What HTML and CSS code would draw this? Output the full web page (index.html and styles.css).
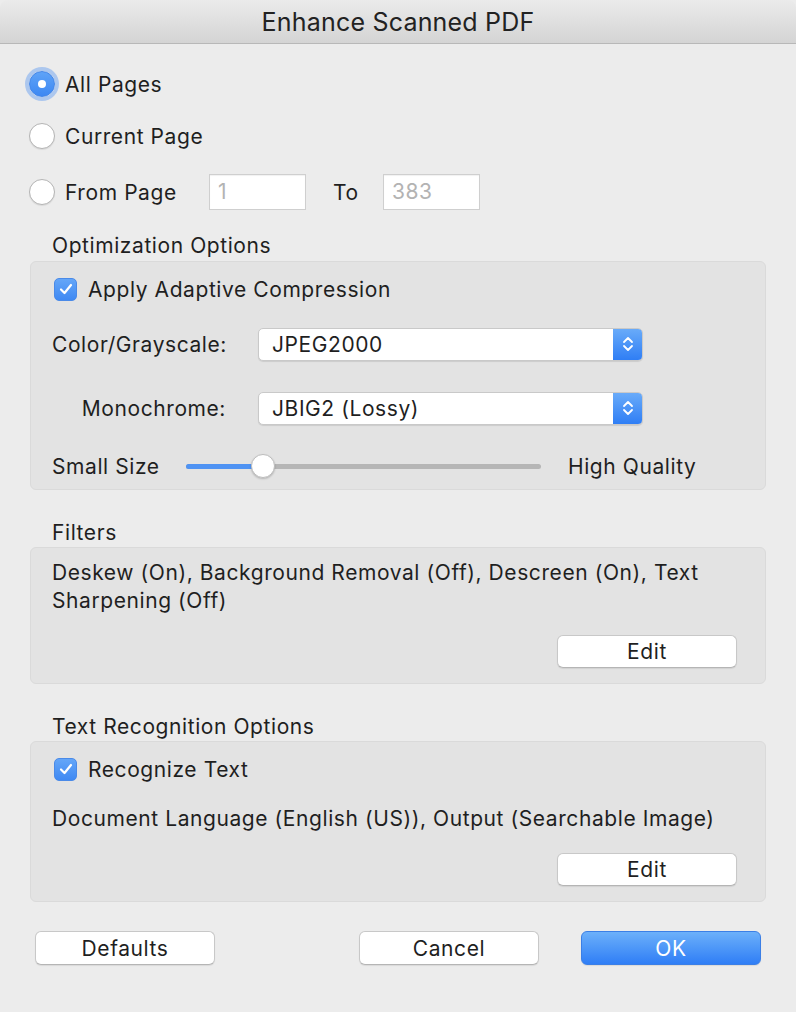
FILE: index.html
```html
<!DOCTYPE html>
<html>
<head>
<meta charset="utf-8">
<link rel="stylesheet" href="styles.css">
</head>
<body>
<div class="window">
  <div class="titlebar">Enhance Scanned PDF</div>
  <div class="content">
    <div class="pages">
      <div class="radio-row r1"><span class="radio on"><span class="dot"></span></span><span>All Pages</span></div>
      <div class="radio-row r2"><span class="radio"></span><span>Current Page</span></div>
      <div class="radio-row r3"><span class="radio"></span><span class="from">From Page</span><span class="field">1</span><span class="to">To</span><span class="field">383</span></div>
    </div>

    <div class="group-label first">Optimization Options</div>
    <div class="box opt">
      <div class="check-row">
        <span class="checkbox"><svg width="16" height="14" viewBox="0 0 16 14"><path d="M3 7.5 L6.5 11 L13 3" fill="none" stroke="#fff" stroke-width="2.2" stroke-linecap="round" stroke-linejoin="round"/></svg></span>
        <span>Apply Adaptive Compression</span>
      </div>
      <div class="popup-row p1">
        <span class="plabel">Color/Grayscale:</span>
        <div class="popup"><span class="pval">JPEG2000</span><span class="parrow"><svg width="12" height="20" viewBox="0 0 12 20"><path d="M2 8 L6 4 L10 8 M2 12 L6 16 L10 12" fill="none" stroke="#fff" stroke-width="1.8" stroke-linecap="round" stroke-linejoin="round"/></svg></span></div>
      </div>
      <div class="popup-row p2">
        <span class="plabel">Monochrome:</span>
        <div class="popup"><span class="pval">JBIG2 (Lossy)</span><span class="parrow"><svg width="12" height="20" viewBox="0 0 12 20"><path d="M2 8 L6 4 L10 8 M2 12 L6 16 L10 12" fill="none" stroke="#fff" stroke-width="1.8" stroke-linecap="round" stroke-linejoin="round"/></svg></span></div>
      </div>
      <div class="slider-row">
        <span class="slabel">Small Size</span>
        <div class="slider">
          <div class="track"><div class="fill" style="width:77px"></div></div>
          <span class="knob" style="left:65px"></span>
        </div>
        <span class="slabel right">High Quality</span>
      </div>
    </div>

    <div class="group-label">Filters</div>
    <div class="box filters">
      <p class="desc">Deskew (On), Background Removal (Off), Descreen (On), Text Sharpening (Off)</p>
      <div class="btn-row"><button class="btn">Edit</button></div>
    </div>

    <div class="group-label">Text Recognition Options</div>
    <div class="box ocr">
      <div class="check-row">
        <span class="checkbox"><svg width="16" height="14" viewBox="0 0 16 14"><path d="M3 7.5 L6.5 11 L13 3" fill="none" stroke="#fff" stroke-width="2.2" stroke-linecap="round" stroke-linejoin="round"/></svg></span>
        <span>Recognize Text</span>
      </div>
      <p class="desc single">Document Language (English (US)), Output (Searchable Image)</p>
      <div class="btn-row"><button class="btn">Edit</button></div>
    </div>

    <div class="footer">
      <button class="btn">Defaults</button>
      <div class="spacer"></div>
      <button class="btn">Cancel</button>
      <button class="btn primary">OK</button>
    </div>
  </div>
</div>
</body>
</html>
```
FILE: styles.css
```css
* { box-sizing: border-box; }
html, body { margin: 0; padding: 0; }
body {
  width: 796px;
  height: 1012px;
  background: #ececec;
  font-family: "Inter", "Roboto", "Liberation Sans", sans-serif;
  font-size: 21px;
  letter-spacing: 0.58px;
  color: #1f1f1f;
  overflow: hidden;
}
.window {
  width: 796px;
  height: 1012px;
  background: #ececec;
}
.titlebar {
  height: 44px;
  line-height: 44px;
  text-align: center;
  font-size: 25px;
  letter-spacing: 0.2px;
  color: #222;
  background: linear-gradient(#ebebeb, #d4d4d4);
  border-bottom: 1px solid #b8b8b8;
  border-radius: 8px 8px 0 0;
}
.content {
  padding: 0 30px;
}
.pages { padding-top: 22px; }
.radio-row {
  display: flex;
  align-items: center;
  height: 36px;
  margin-left: -1px;
}
.r2 { margin-top: 16px; }
.r3 { margin-top: 20px; }
.radio {
  width: 26px;
  height: 26px;
  border-radius: 50%;
  background: #fff;
  border: 1px solid #b4b4b4;
  box-shadow: 0 1px 1px rgba(0,0,0,0.08);
  margin-right: 10px;
  flex: none;
  display: flex;
  align-items: center;
  justify-content: center;
}
.radio.on {
  background: linear-gradient(#5fa3f7, #3d88f3);
  border: 1px solid #4286ea;
  box-shadow: 0 0 0 4px rgba(120, 170, 240, 0.55);
}
.radio .dot {
  width: 8px;
  height: 8px;
  border-radius: 50%;
  background: #fff;
}
.from { width: 144px; }
.field {
  width: 97px;
  height: 36px;
  line-height: 34px;
  background: #fff;
  border: 1px solid #cfcfcf;
  box-shadow: inset 0 1px 1px rgba(0,0,0,0.06);
  color: #b3b3b3;
  padding-left: 8px;
}
.to { width: 77px; padding-left: 27px; }

.group-label {
  height: 24px;
  line-height: 24px;
  padding-left: 22px;
  margin-top: 31px;
  margin-bottom: 2px;
}
.group-label.first { margin-top: 24px; margin-bottom: 3px; }

.box {
  background: #e3e3e3;
  border: 1px solid #dadada;
  border-radius: 6px;
  padding: 15px 28px 15px 21px;
}
.box.opt { padding-bottom: 11px; }
.box.filters { padding-top: 11px; }

.check-row {
  display: flex;
  align-items: center;
  height: 24px;
}
.checkbox {
  width: 23px;
  height: 23px;
  border-radius: 5px;
  background: linear-gradient(#64a6f8, #3f89f3);
  border: 1px solid #4a8ae8;
  margin-left: 2px;
  margin-right: 11px;
  display: flex;
  align-items: center;
  justify-content: center;
  flex: none;
}
.popup-row {
  display: flex;
  align-items: center;
  height: 32px;
}
.p1 { margin-top: 27px; }
.p2 { margin-top: 32px; }
.plabel {
  width: 174px;
  text-align: right;
  margin-right: 32px;
  flex: none;
}
.popup {
  width: 385px;
  height: 33px;
  background: #fff;
  border: 1px solid #c9c9c9;
  border-radius: 5px;
  box-shadow: 0 1px 1px rgba(0,0,0,0.1);
  display: flex;
  overflow: hidden;
}
.pval {
  flex: 1;
  line-height: 31px;
  padding-left: 13px;
}
.parrow {
  width: 29px;
  background: linear-gradient(#69abf9, #2f7ef5);
  display: flex;
  align-items: center;
  justify-content: center;
}
.slider-row {
  display: flex;
  align-items: center;
  height: 24px;
  margin-top: 30px;
}
.slabel { width: 134px; flex: none; }
.slabel.right { width: auto; margin-left: 27px; }
.slider {
  position: relative;
  width: 355px;
  height: 24px;
  flex: none;
}
.track {
  position: absolute;
  left: 0;
  right: 0;
  top: 10px;
  height: 5px;
  border-radius: 3px;
  background: #b6b6b6;
  overflow: hidden;
}
.fill {
  height: 100%;
  background: #4f93f3;
}
.knob {
  position: absolute;
  top: 0;
  width: 24px;
  height: 24px;
  border-radius: 50%;
  background: #fff;
  border: 1px solid #bdbdbd;
  box-shadow: 0 1px 2px rgba(0,0,0,0.2);
}

.desc {
  margin: 0;
  line-height: 28px;
}
.desc.single { margin-top: 24px; }
.btn-row {
  display: flex;
  justify-content: flex-end;
  margin-top: 20px;
}
.btn {
  width: 180px;
  height: 34px;
  font-family: inherit;
  font-size: 21px;
  letter-spacing: 0.58px;
  color: #1f1f1f;
  background: #fff;
  border: 1px solid #c8c8c8;
  border-bottom-color: #b5b5b5;
  border-radius: 6px;
  box-shadow: 0 1px 1px rgba(0,0,0,0.08);
  padding: 0;
}
.btn-row .btn { height: 33px; }
.footer {
  display: flex;
  margin-top: 29px;
  padding: 0 5px;
}
.spacer { flex: 1; }
.footer .btn + .btn { margin-left: 42px; }
.btn.primary {
  background: linear-gradient(#6cb0fa, #2f7ef6);
  border: 1px solid #3b7fe6;
  color: #fff;
}
```
